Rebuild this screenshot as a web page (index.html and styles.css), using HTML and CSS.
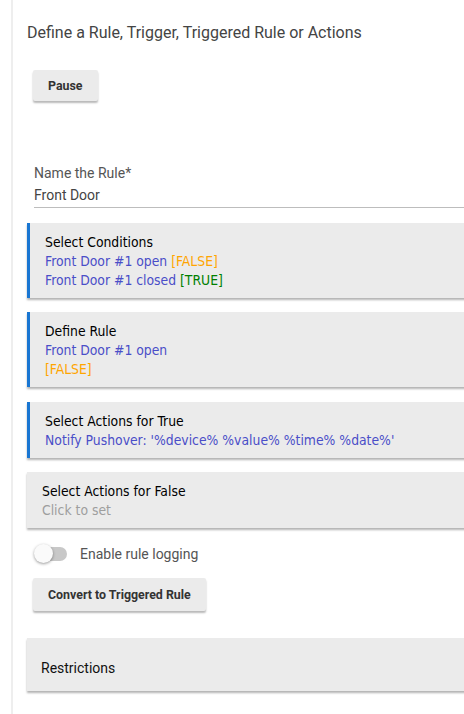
FILE: index.html
```html
<!DOCTYPE html>
<html>
<head>
<meta charset="utf-8">
<link rel="stylesheet" href="styles.css">
</head>
<body>
<div class="page">
  <div class="title">Define a Rule, Trigger, Triggered Rule or Actions</div>
  <div class="btn-row"><button class="btn">Pause</button></div>
  <div class="field">
    <div class="field-label">Name the Rule*</div>
    <div class="field-value">Front Door</div>
  </div>
  <div class="card accent c1">
    <div class="card-title">Select Conditions</div>
    <div class="line">Front Door #1 open <span class="false">[FALSE]</span></div>
    <div class="line">Front Door #1 closed <span class="true">[TRUE]</span></div>
  </div>
  <div class="card accent c2">
    <div class="card-title">Define Rule</div>
    <div class="line">Front Door #1 open</div>
    <div class="line"><span class="false">[FALSE]</span></div>
  </div>
  <div class="card accent c3">
    <div class="card-title">Select Actions for True</div>
    <div class="line">Notify Pushover: '%device% %value% %time% %date%'</div>
  </div>
  <div class="card c4">
    <div class="card-title">Select Actions for False</div>
    <div class="line muted">Click to set</div>
  </div>
  <div class="toggle-row">
    <span class="toggle"><span class="track"></span><span class="knob"></span></span>
    <span class="toggle-label">Enable rule logging</span>
  </div>
  <div class="btn-row"><button class="btn btn-wide">Convert to Triggered Rule</button></div>
  <div class="restrictions">Restrictions</div>
</div>
</body>
</html>
```
FILE: styles.css
```css
html, body {
  margin: 0;
  padding: 0;
  background: #fff;
  overflow: hidden;
}
body {
  width: 464px;
  height: 714px;
}
.page {
  margin-left: 11px;
  border-left: 2px solid #eeeeee;
  padding-left: 14px;
  padding-top: 23px;
  width: 540px;
  min-height: 714px;
  box-sizing: border-box;
  font-family: Roboto, "Liberation Sans", sans-serif;
}
.title {
  font-size: 16px;
  line-height: 20px;
  color: #444;
}
.btn-row {
  padding-left: 6px;
}
.btn {
  font-family: Roboto, "Liberation Sans", sans-serif;
  font-weight: bold;
  font-size: 12.4px;
  color: #333;
  background: #ebebeb;
  border: none;
  border-radius: 2px;
  box-shadow: 0 2px 2px rgba(0,0,0,0.28);
  height: 31px;
  padding: 0 15px;
  margin-top: 27px;
}
.field {
  margin-top: 64px;
  margin-left: 7px;
  border-bottom: 1px solid #bdbdbd;
  padding-bottom: 4px;
}
.field-label {
  font-size: 14px;
  line-height: 16px;
  color: #555;
}
.field-value {
  font-size: 14px;
  line-height: 16px;
  margin-top: 6px;
  color: #444;
}
.card {
  background: #ebebeb;
  box-shadow: 0 2px 2px rgba(0,0,0,0.3);
  padding: 10px 0 8px 15px;
  font-family: "DejaVu Sans Condensed", "DejaVu Sans", sans-serif;
  font-stretch: condensed;
  font-size: 13.8px;
  line-height: 19px;
}
.card.accent {
  border-left: 3px solid #1976d2;
}
.c1 { margin-top: 15px; }
.c2 { margin-top: 14px; }
.c3 { margin-top: 15px; }
.c4 { margin-top: 14px; }
.card-title {
  color: #000;
}
.line {
  color: #4a4ec8;
}
.false { color: #ffa500; }
.true { color: #008000; }
.muted { color: #9e9e9e; }
.toggle-row {
  display: flex;
  align-items: center;
  height: 20px;
  margin-top: 16px;
  padding-left: 7px;
}
.toggle {
  position: relative;
  width: 33px;
  height: 20px;
  display: inline-block;
}
.track {
  position: absolute;
  left: 2px;
  top: 3px;
  width: 31px;
  height: 14px;
  border-radius: 7px;
  background: #c8c8c8;
}
.knob {
  position: absolute;
  left: 0;
  top: 0;
  width: 19px;
  height: 19px;
  border-radius: 50%;
  background: #fafafa;
  box-shadow: 0 1px 3px rgba(0,0,0,0.4);
}
.toggle-label {
  margin-left: 13px;
  font-size: 14px;
  color: #555;
}
.btn-wide {
  height: 33px;
  margin-top: 14px;
}
.restrictions {
  margin-top: 27px;
  background: #ebebeb;
  box-shadow: 0 2px 2px rgba(0,0,0,0.3);
  padding: 22px 0 15px 14px;
  font-size: 14px;
  line-height: 16px;
  color: #111;
}
```
